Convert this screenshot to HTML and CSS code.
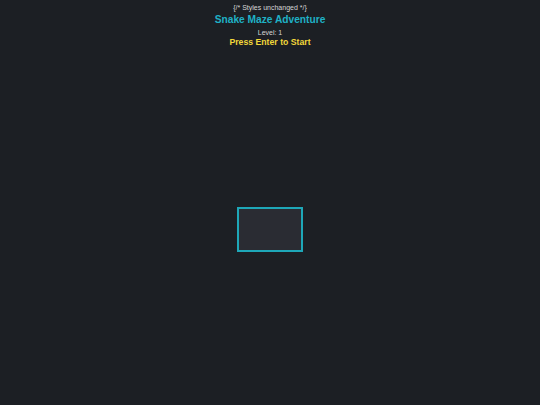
FILE: index.html
```html
<!DOCTYPE html>
<html>
<head>
<meta charset="utf-8">
<link rel="stylesheet" href="styles.css">
</head>
<body>
<div class="app">
  <div class="note">{/* Styles unchanged */}</div>
  <h1 class="title">Snake Maze Adventure</h1>
  <div class="level">Level: 1</div>
  <div class="prompt">Press Enter to Start</div>
  <div class="stage">
    <div class="board"></div>
  </div>
</div>
</body>
</html>
```
FILE: styles.css
```css
html, body {
  margin: 0;
  padding: 0;
  background: #1c1f24;
  height: 100%;
}
.app {
  font-family: "Liberation Sans", Arial, sans-serif;
  display: flex;
  flex-direction: column;
  align-items: center;
  color: #e0e0e0;
  padding-top: 3px;
}
.note {
  font-size: 7px;
  line-height: 9px;
  color: #d6d6d6;
}
.title {
  margin: 1px 0 0 0;
  font-size: 10.2px;
  line-height: 14px;
  font-weight: bold;
  color: #1fb1c6;
}
.level {
  margin-top: 2px;
  font-size: 7px;
  line-height: 8px;
  color: #d6d6d6;
}
.prompt {
  font-size: 8.7px;
  line-height: 11px;
  font-weight: bold;
  color: #f2d83a;
}
.stage {
  margin-top: 159px;
}
.board {
  width: 62px;
  height: 41px;
  border: 2px solid #1ea7b8;
  background: #2a2c33;
}
```
